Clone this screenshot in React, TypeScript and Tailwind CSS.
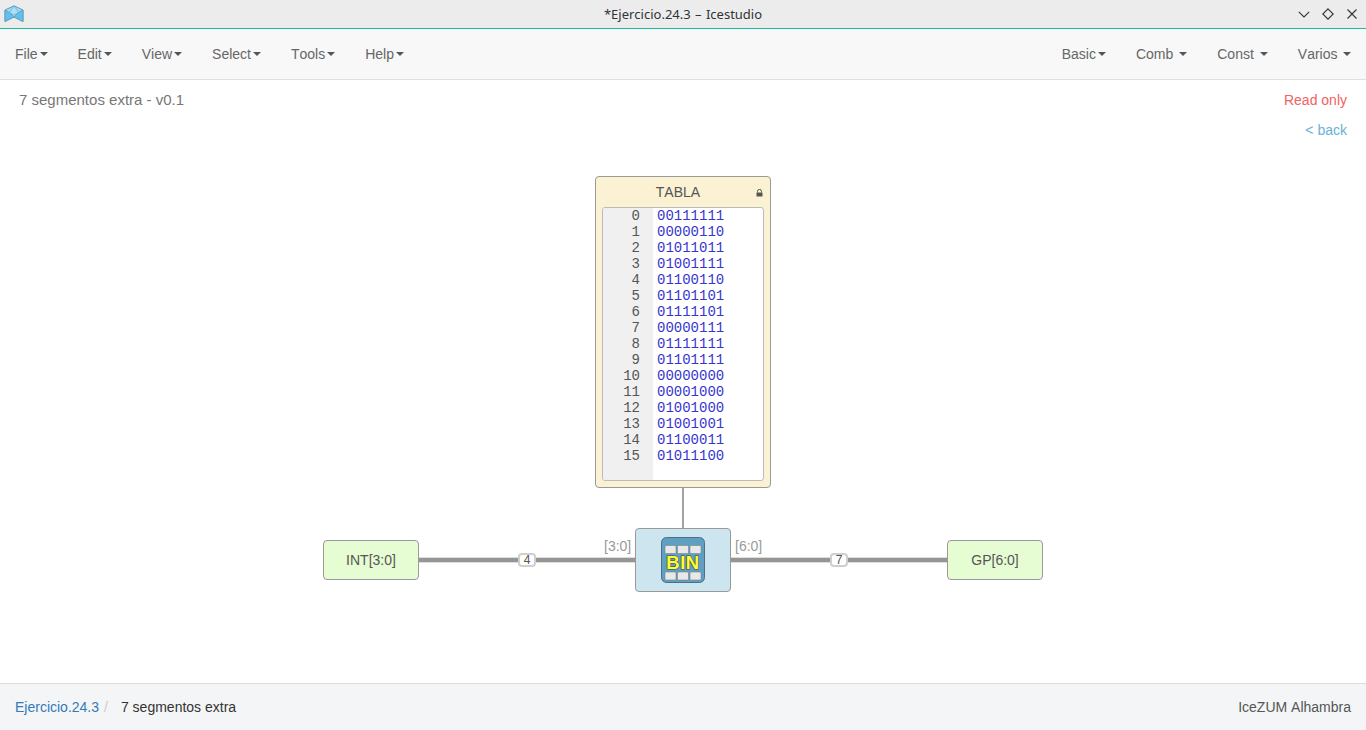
const leftMenus = ["File", "Edit", "View", "Select", "Tools", "Help"];
const rightMenus = [
  { label: "Basic", gap: "ml-[2px]" },
  { label: "Comb", gap: "ml-[6px]" },
  { label: "Const", gap: "ml-[6px]" },
  { label: "Varios", gap: "ml-[5.5px]" },
];
const rows = [
  "00111111", "00000110", "01011011", "01001111",
  "01100110", "01101101", "01111101", "00000111",
  "01111111", "01101111", "00000000", "00001000",
  "01001000", "01001001", "01100011", "01011100",
];

function Caret({ className }: { className: string }) {
  return (
    <span
      className={`inline-block w-0 h-0 border-x-[4px] border-x-transparent border-t-[4px] border-t-[#555] ${className}`}
    />
  );
}

function Logo() {
  return (
    <svg width="20" height="18" viewBox="0 0 20 18" className="ml-[4px]">
      <path d="M10 0.8 L19 5 L19 16.5 L10 12 L1 16.5 L1 5 Z" fill="#9bd9f4" stroke="#5f9dbb" strokeWidth="1" />
      <path d="M10 0.8 L14.5 7.5 L10 10 L5.5 7.5 Z" fill="#a9e0f7" stroke="#6ba9c6" strokeWidth="0.7" />
      <path d="M1 5 L5.5 7.5 L10 12 L1 16.5 Z" fill="#62c0ec" stroke="#5f9dbb" strokeWidth="0.8" />
      <path d="M19 5 L14.5 7.5 L10 12 L19 16.5 Z" fill="#62c0ec" stroke="#5f9dbb" strokeWidth="0.8" />
    </svg>
  );
}

function WindowButtons() {
  return (
    <div className="flex items-center gap-[12px] mr-[8px]">
      <svg width="12" height="12" viewBox="0 0 12 12" fill="none" stroke="#2f343a" strokeWidth="1.1">
        <path d="M0.8 3.8 L6 9 L11.2 3.8" />
      </svg>
      <svg width="12" height="12" viewBox="0 0 12 12" fill="none" stroke="#2f343a" strokeWidth="1.1">
        <path d="M6 0.8 L11.2 6 L6 11.2 L0.8 6 Z" />
      </svg>
      <svg width="12" height="12" viewBox="0 0 12 12" fill="none" stroke="#2f343a" strokeWidth="1.1">
        <path d="M1.5 1.5 L10.5 10.5 M10.5 1.5 L1.5 10.5" />
      </svg>
    </div>
  );
}

function BinIcon() {
  const cells = [4, 16.5, 29];
  return (
    <svg width="44" height="46" viewBox="0 0 44 46">
      <rect x="0.5" y="0.5" width="43" height="45" rx="5" fill="#5f9fc2" stroke="#4d6f85" />
      {cells.map((x) => (
        <rect key={`t${x}`} x={x} y="8.5" width="11" height="8" rx="1" fill="#e8e8e8" stroke="#777" strokeWidth="0.5" />
      ))}
      {cells.map((x) => (
        <rect key={`b${x}`} x={x} y="35" width="11" height="8" rx="1" fill="#e8e8e8" stroke="#777" strokeWidth="0.5" />
      ))}
      <text
        x="22"
        y="32"
        textAnchor="middle"
        fontFamily="'Liberation Sans', sans-serif"
        fontWeight="700"
        fontSize="18.5"
        letterSpacing="0.5"
        fill="#ffff30"
        stroke="#4a4a3a"
        strokeWidth="1.2"
        paintOrder="stroke"
      >
        BIN
      </text>
    </svg>
  );
}

function Wire({ className, label }: { className: string; label: string }) {
  return (
    <div className={`absolute top-[557px] h-[6px] bg-[#959595] border-y border-y-[#dcdcdc] ${className}`}>
      <span className="absolute top-[-5px] left-[99px] w-[18px] h-[14px] flex items-center justify-center bg-white border-2 border-[#cfcfcf] rounded-[4px] text-[12px] leading-none text-[#555]">
        {label}
      </span>
    </div>
  );
}

function PinBlock({ className, label }: { className: string; label: string }) {
  return (
    <div
      className={`absolute top-[540px] h-[40px] flex items-center justify-center bg-[#e6fcd2] border border-[#999] rounded-[4px] text-[14px] text-[#555] ${className}`}
    >
      {label}
    </div>
  );
}

export default function App() {
  return (
    <div className="h-[730px] w-[1366px] flex flex-col bg-white overflow-hidden font-['Liberation_Sans',sans-serif] [font-kerning:none]">
      <div className="h-[29px] shrink-0 flex items-center justify-between bg-[#ececec] border-b border-b-[#1abc9c]">
        <div className="w-[80px]">
          <Logo />
        </div>
        <span className="pt-[1px] font-['Noto_Sans',sans-serif] text-[13px] [word-spacing:1px] text-[#2f343a]">
          *Ejercicio.24.3 – Icestudio
        </span>
        <div className="w-[80px] flex justify-end">
          <WindowButtons />
        </div>
      </div>

      <div className="h-[51px] shrink-0 flex justify-between items-center bg-[#f8f8f8] border-b border-b-[#e0e0e0] text-[14px] text-[#666]">
        <div className="flex">
          {leftMenus.map((m) => (
            <div key={m} className="px-[15px] flex items-center">
              {m}
              <Caret className="ml-[2px]" />
            </div>
          ))}
        </div>
        <div className="flex">
          {rightMenus.map((m) => (
            <div key={m.label} className="px-[15px] flex items-center">
              {m.label}
              <Caret className={m.gap} />
            </div>
          ))}
        </div>
      </div>

      <main className="flex-1 flex justify-between items-start px-[19px] py-[10px]">
        <span className="text-[15px] leading-[20px] text-[#777]">7 segmentos extra - v0.1</span>
        <div className="flex flex-col items-end gap-[10px] text-[14px] leading-[20px]">
          <span className="text-[#f0625f]">Read only</span>
          <span className="text-[#6bb1d6]">&lt; back</span>
        </div>
      </main>

      {/* nodes of the diagram sit on a free canvas */}
      <div className="absolute top-[176px] left-[595px] w-[176px] h-[312px] flex flex-col px-[6px] bg-[#fbf1d3] border border-[#999] rounded-[4px]">
        <div className="h-[30px] shrink-0 relative flex items-center justify-center pr-[10px] text-[14px] text-[#555]">
          TABLA
          <svg width="7" height="8" viewBox="0 0 7 8" className="absolute right-[1px] top-[12px]">
            <path d="M1.5 3.5 V2.4 a2 2 0 0 1 4 0 V3.5" fill="none" stroke="#555" strokeWidth="1" />
            <rect x="0.5" y="3.5" width="6" height="4" rx="0.5" fill="#555" />
          </svg>
        </div>
        <div className="h-[274px] flex bg-white border border-[#bbb] rounded-[3px] overflow-hidden font-['Liberation_Mono',monospace] text-[14px] leading-[16px]">
          <div className="w-[50px] shrink-0 bg-[#f0f0f0] text-[#555] text-right pr-[13px]">
            {rows.map((_, i) => (
              <div key={i}>{i}</div>
            ))}
          </div>
          <div className="pl-[4px] text-[#3535d0]">
            {rows.map((r, i) => (
              <div key={i}>{r}</div>
            ))}
          </div>
        </div>
      </div>

      <div className="absolute left-[682px] top-[488px] w-[2px] h-[40px] bg-[#a3a3a3]" />

      <div className="absolute left-[635px] top-[528px] w-[96px] h-[64px] flex items-center justify-center bg-[#cde5ef] border border-[#999] rounded-[4px]">
        <BinIcon />
      </div>

      <span className="absolute left-[604px] top-[538px] text-[14px] leading-[16px] text-[#999]">[3:0]</span>
      <span className="absolute left-[735px] top-[538px] text-[14px] leading-[16px] text-[#999]">[6:0]</span>

      <Wire className="left-[419px] w-[216px]" label="4" />
      <Wire className="left-[731px] w-[216px]" label="7" />

      <PinBlock className="left-[323px] w-[96px]" label="INT[3:0]" />
      <PinBlock className="left-[947px] w-[96px]" label="GP[6:0]" />

      <div className="h-[47px] shrink-0 flex items-center justify-between px-[15px] bg-[#f4f5f7] border-t border-t-[#dcdcdc] text-[14px]">
        <div className="flex items-center">
          <span className="text-[#337ab7]">Ejercicio.24.3</span>
          <span className="ml-[5px] text-[#ccc]">/</span>
          <span className="ml-[13px] text-[#333]">7 segmentos extra</span>
        </div>
        <span className="text-[#555]">IceZUM Alhambra</span>
      </div>
    </div>
  );
}
